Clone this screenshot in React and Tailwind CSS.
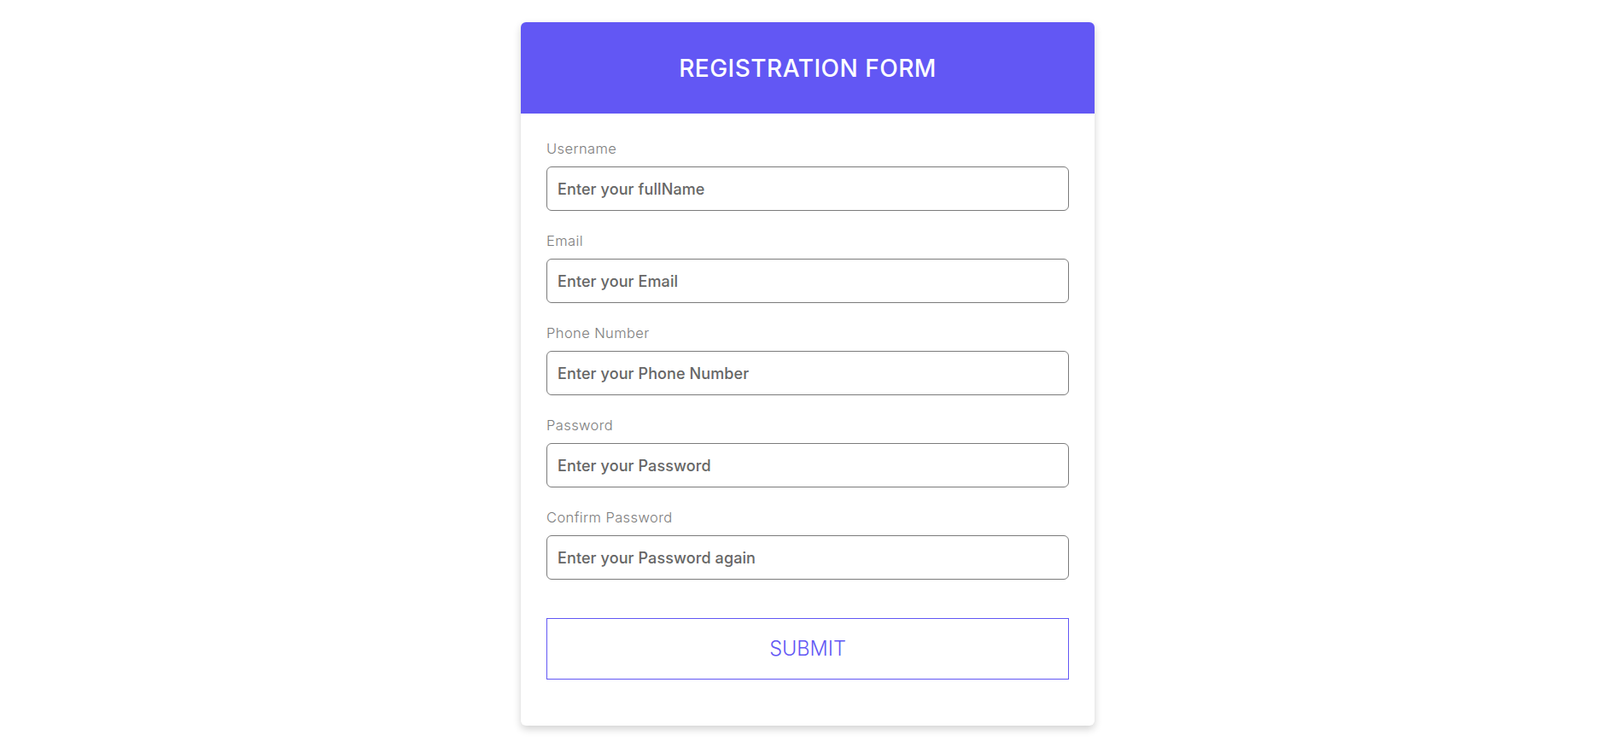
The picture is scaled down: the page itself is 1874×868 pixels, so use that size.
import React, { useState } from 'react';

const FIELDS = [
  { id: 'username', label: 'Username', placeholder: 'Enter your fullName', type: 'text' },
  { id: 'email', label: 'Email', placeholder: 'Enter your Email', type: 'email' },
  { id: 'phone', label: 'Phone Number', placeholder: 'Enter your Phone Number', type: 'tel' },
  { id: 'password', label: 'Password', placeholder: 'Enter your Password', type: 'password' },
  { id: 'confirm', label: 'Confirm Password', placeholder: 'Enter your Password again', type: 'password' },
];

export default function App() {
  const [values, setValues] = useState({});

  const handleSubmit = (e) => {
    e.preventDefault();
  };

  return (
    <div
      className="min-h-screen bg-white flex justify-center pt-[26px] pl-[18px]"
      style={{ fontFamily: 'Inter, "Noto Sans", sans-serif' }}
    >
      <div className="w-[672px] h-[824px] bg-white rounded-md shadow-[0_4px_10px_rgba(0,0,0,0.18)] overflow-hidden">
        <div className="h-[107px] bg-[#6257f4] flex items-center justify-center">
          <h1 className="text-white text-[28px] font-medium tracking-[0.5px]">REGISTRATION FORM</h1>
        </div>

        <form onSubmit={handleSubmit} className="px-[30px] pt-[29px]">
          {FIELDS.map((f) => (
            <div key={f.id} className="mb-[23px]">
              <label htmlFor={f.id} className="block text-[16.5px] leading-6 font-light tracking-[0.4px] text-[#7d7d7d] mb-[9px]">
                {f.label}
              </label>
              <input
                id={f.id}
                type={f.type}
                value={values[f.id] || ''}
                onChange={(e) => setValues({ ...values, [f.id]: e.target.value })}
                placeholder={f.placeholder}
                className="block w-full h-[52px] rounded-md border border-[#7b7b7b] px-[12px] text-[18px] font-medium tracking-[0.1px] text-[#555] placeholder:text-[#666] outline-none"
              />
            </div>
          ))}

          <button
            type="submit"
            className="mt-[22px] w-full h-[72px] border border-[#6257f4] text-[#6257f4] text-[23.5px] font-light"
          >
            SUBMIT
          </button>
        </form>
      </div>
    </div>
  );
}
